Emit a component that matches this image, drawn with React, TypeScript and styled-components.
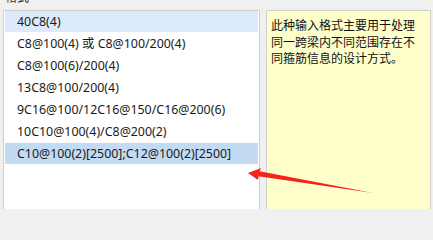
import React from 'react';
import styled, {createGlobalStyle} from 'styled-components';

const Global = createGlobalStyle`
  html, body {margin: 0;padding: 0;background: #f0f0f0;overflow: hidden;}
  body {font-family: "Noto Sans", "Noto Sans CJK SC", sans-serif;}
`;

const Page = styled.div`
  position: relative;width: 433px;height: 209px;overflow: hidden;
  padding: 0 2px 0 3px;box-sizing: border-box;
`;
const Caption = styled.div`
  height: 10px;line-height: 10px;font-size: 12px;color: #333;
  font-family: "Noto Sans CJK SC", sans-serif;
  padding-left: 2px;overflow: hidden;
  span{position: relative;top: -8px;}
`;
const Body = styled.div`
  display: flex;align-items: flex-start;gap: 6px;
`;
const ListBox = styled.div`
  width: 257px;height: 220px;box-sizing: border-box;
  border: 1px solid #cfcfcf;background: #fff;padding: 0 1px;
`;
const Row = styled.div<{$sel?: 'light' | 'dark'}>`
  height: 21px;line-height: 21px;margin-bottom: 1px;padding-left: 12px;
  font-size: 12.4px;color: #1a1a1a;white-space: nowrap;
  background: ${p => p.$sel === 'light' ? '#dceafc' : p.$sel === 'dark' ? '#c3dbf2' : 'transparent'};
`;
const Note = styled.div`
  flex: 1;height: 220px;box-sizing: border-box;
  border: 1px solid #cfcfcf;background: #ffffcc;
  padding: 6px 4px 0 4px;
  font-family: "Noto Sans CJK SC", sans-serif;font-size: 12px;line-height: 16.5px;color: #111;
`;
const Arrow = styled.svg`
  position: absolute;left: 0;top: 0;pointer-events: none;
`;

const items = [
  '40C8(4)',
  'C8@100(4) 或 C8@100/200(4)',
  'C8@100(6)/200(4)',
  '13C8@100/200(4)',
  '9C16@100/12C16@150/C16@200(6)',
  '10C10@100(4)/C8@200(2)',
  'C10@100(2)[2500];C12@100(2)[2500]',
];

export default function App() {
  return (
    <Page>
      <Global/>
      <Caption><span>格式</span></Caption>
      <Body>
        <ListBox>
          {items.map((t, i) => (
            <Row key={t} $sel={i === 0 ? 'light' : i === items.length - 1 ? 'dark' : undefined}>{t}</Row>
          ))}
        </ListBox>
        <Note>此种输入格式主要用于处理同一跨梁内不同范围存在不同箍筋信息的设计方式。</Note>
      </Body>
      <Arrow width="433" height="209" viewBox="0 0 433 209">
        <path d="M248 173 L261 168 L259.5 171.2 L373 193 L258.5 176.3 L258 180 Z" fill="#f5231c"/>
      </Arrow>
    </Page>
  );
}
